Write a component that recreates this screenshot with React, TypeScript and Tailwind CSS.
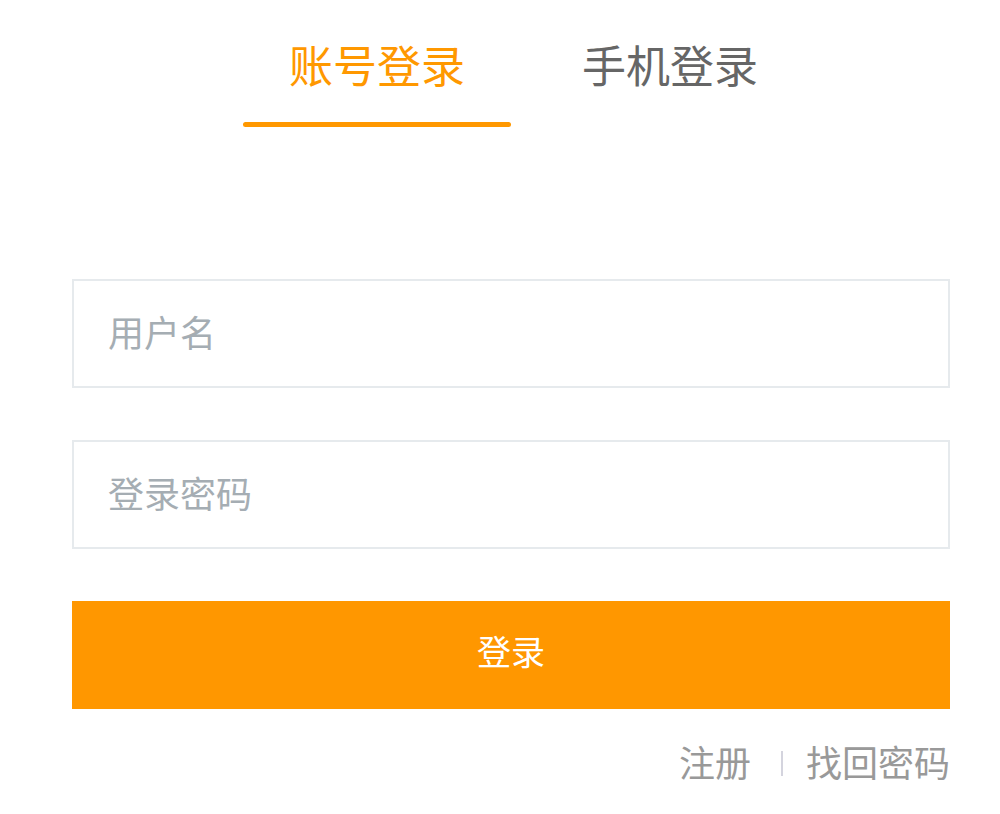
export default function App() {
  const font = { fontFamily: '"Noto Sans CJK SC", "Noto Sans", sans-serif' };
  return (
    <div className="w-[1000px] h-[814px] bg-white" style={font}>
      <div className="flex pl-[243px] pt-[34px]">
        <div className="w-[268px] flex flex-col items-center">
          <div className="text-[44px] leading-[60px] text-[#ff9800]">账号登录</div>
          <div className="mt-[28px] h-[5px] w-full rounded-full bg-[#ff9800]" />
        </div>
        <div className="w-[268px] ml-[25px] flex flex-col items-center">
          <div className="text-[44px] leading-[60px] text-[#666666]">手机登录</div>
        </div>
      </div>
      <div className="ml-[72px] w-[878px] mt-[152px] flex flex-col">
        <div className="h-[109px] border-2 border-[#e6eaed] flex items-center pl-[34px] pb-[6px]">
          <span className="text-[36px] leading-[48px] text-[#a5adb3]">用户名</span>
        </div>
        <div className="mt-[52px] h-[109px] border-2 border-[#e6eaed] flex items-center pl-[34px] pb-[6px]">
          <span className="text-[36px] leading-[48px] text-[#a5adb3]">登录密码</span>
        </div>
        <div className="mt-[52px] h-[108px] bg-[#ff9700] flex items-center justify-center pb-[8px]">
          <span className="text-[34px] leading-[46px] text-white">登录</span>
        </div>
        <div className="mt-[28px] flex items-center justify-end">
          <span className="text-[36px] leading-[48px] text-[#999999]">注册</span>
          <span className="ml-[30px] mr-[23px] w-[2px] h-[25px] bg-[#d4d4de] mt-[4px]" />
          <span className="text-[36px] leading-[48px] text-[#999999]">找回密码</span>
        </div>
      </div>
    </div>
  );
}
